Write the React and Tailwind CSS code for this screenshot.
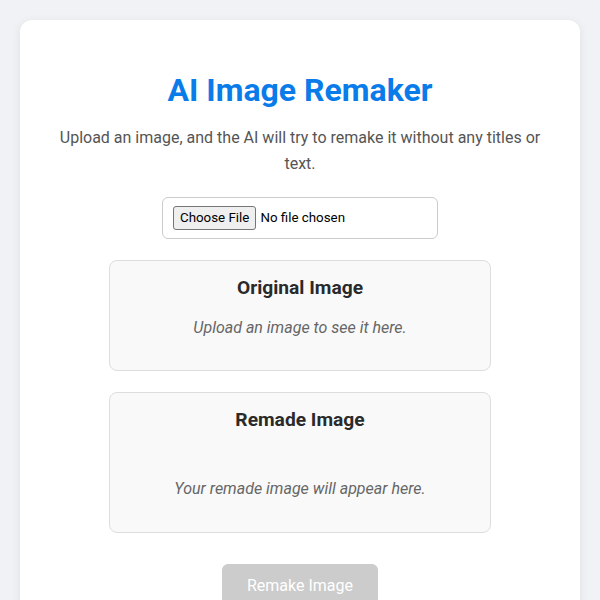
export default function App() {
  return (
    <div className="min-h-screen bg-[#f0f2f5] p-5 font-['Roboto',sans-serif]">
      <div className="bg-white rounded-xl shadow-[0_2px_10px_rgba(0,0,0,0.08)] px-[30px] pt-[51px] pb-10 text-center">
        <h1 className="text-[32px] font-bold leading-[38px] text-[#0a7cea]">AI Image Remaker</h1>
        <p className="mt-4 text-base leading-[25.6px] text-[#555]">
          Upload an image, and the AI will try to remake it without any titles or text.
        </p>
        <div className="mt-[21px] flex justify-center">
          <div className="w-[276px] h-[42px] border border-[#ccc] rounded-md px-[10px] flex items-center">
            <input type="file" className="text-[13.33px] text-black file:mr-1 file:px-[6px] file:py-[1px] file:border file:border-[#767676] file:rounded-[3px] file:bg-[#efefef] file:text-black" />
          </div>
        </div>
        <div className="mt-[21px] flex flex-col items-center gap-[21px]">
          <div className="w-[382px] h-[111px] bg-[#f9f9f9] border border-[#ddd] rounded-lg pt-[14px]">
            <h2 className="text-[19.2px] font-bold leading-[26px] text-[#2a2a2a]">Original Image</h2>
            <p className="mt-[15px] text-base italic text-[#666]">Upload an image to see it here.</p>
          </div>
          <div className="w-[382px] h-[141px] bg-[#f9f9f9] border border-[#ddd] rounded-lg pt-[14px]">
            <h2 className="text-[19.2px] font-bold leading-[26px] text-[#2a2a2a]">Remade Image</h2>
            <p className="mt-[44px] text-base italic text-[#666]">Your remade image will appear here.</p>
          </div>
        </div>
        <button disabled className="mt-[31px] w-[156px] h-[44px] rounded-md bg-[#ccc] text-white text-base">
          Remake Image
        </button>
      </div>
    </div>
  );
}
